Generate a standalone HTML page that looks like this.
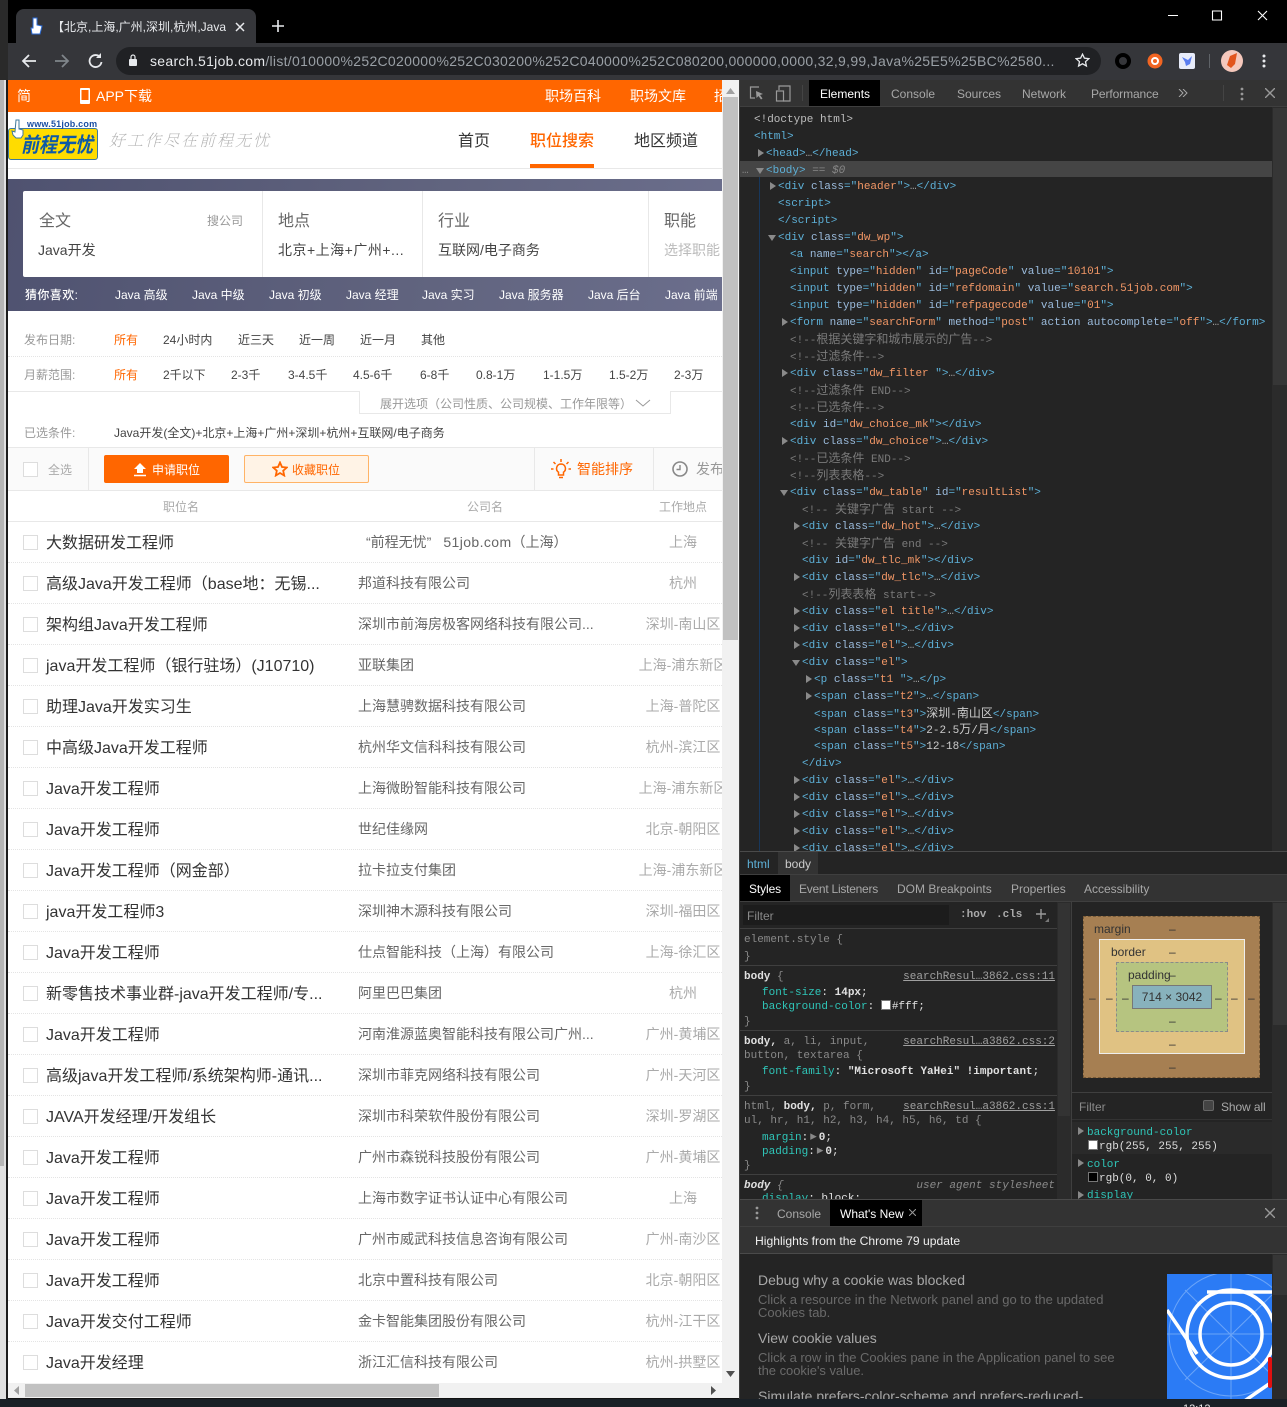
<!DOCTYPE html>
<html lang="zh"><head><meta charset="utf-8"><title>51job</title>
<style>
*{box-sizing:border-box}
html,body{margin:0;padding:0;width:1287px;height:1407px;overflow:hidden;background:#111;font-family:"Liberation Sans","Noto Sans CJK SC",sans-serif}
.a{position:absolute;white-space:nowrap}
.t{position:absolute;white-space:nowrap;line-height:20px;height:20px}
.f12{font-size:12px}.f14{font-size:14px}.f16{font-size:16px}
.g{color:#999}.d{color:#444}.o{color:#f60}
#clip{position:absolute;left:0;top:0;width:722px;height:1383px;overflow:hidden}
.row{position:absolute;left:8px;width:714px;height:41px;border-bottom:1px dotted #e4e4e4;background:#fff}
.row i{position:absolute;left:15px;top:13px;width:15px;height:15px;border:1px solid #ddd}
.row b{position:absolute;font-weight:400;white-space:nowrap;top:10px;line-height:20px}
.row .n{left:38px;top:12px;font-size:16px;color:#333}
.row .c{left:350px;font-size:14px;color:#666}
.row .l{left:575px;width:200px;text-align:center;font-size:14px;color:#aaa}
.code{position:absolute;left:740px;top:111.6px;width:532px;height:739.4px;overflow:hidden;font:11px/16.977px "Liberation Mono","Noto Sans CJK SC",monospace;color:#a8a8a8}
.code div{position:relative;height:16.977px;white-space:pre}
.k{font-size:12px}
.x{color:#5db0d7}.y{color:#9bbbdc}.z{color:#f29766}.m{color:#7a7a7a}
.r:before,.dn:before{content:"";position:absolute;top:3px}
.r:before{left:-8px;border-left:6px solid #8a8a8a;border-top:4px solid transparent;border-bottom:4px solid transparent}
.dn:before{left:-10px;top:5px;border-top:6px solid #8a8a8a;border-left:4px solid transparent;border-right:4px solid transparent}
.i0{padding-left:14px}.i1{padding-left:26px}.i2{padding-left:38px}.i3{padding-left:50px}.i4{padding-left:62px}.i5{padding-left:74px}
.i1.r:before{left:18px}.i2.r:before{left:30px}.i3.r:before{left:42px}.i4.r:before{left:54px}.i5.r:before{left:66px}
.i1.dn:before{left:16px}.i2.dn:before{left:28px}.i3.dn:before{left:40px}.i4.dn:before{left:52px}
.s{position:absolute;white-space:nowrap;font:11px/14px "Liberation Mono",monospace;color:#a0a0a0;margin-top:6px}
.v{color:#2fc5b8}.w{color:#e0e0e0}.li{color:#a0a0a0;text-decoration:underline}
.dt{position:absolute;font-size:12px;line-height:16px;white-space:nowrap;color:#a8a8a8}
.h{position:absolute;height:1px;background:#3f3f3f}
.sw{display:inline-block;width:10px;height:10px;border:1px solid #777;vertical-align:-1px;margin-right:1px}
</style></head><body>

<!-- window frame -->
<div class="a" style="left:0;top:0;width:1287px;height:43px;background:#000"></div>
<div class="a" style="left:0;top:0;width:8px;height:80px;background:#2a2a2a"></div>
<div class="a" style="left:0;top:80px;width:6px;height:1320px;background:#e0e0e0"></div>
<div class="a" style="left:0;top:80px;width:4px;height:1086px;background:#b5b5b5"></div>
<div class="a" style="left:6px;top:80px;width:2px;height:1320px;background:#1c1c1c"></div>
<div class="a" style="left:8px;top:43px;width:1279px;height:37px;background:#35363a"></div>
<div class="a" style="left:16px;top:9px;width:240px;height:35px;background:#35363a;border-radius:8px 8px 0 0"></div>
<svg class="a" style="left:28px;top:16px" width="16" height="20" viewBox="0 0 16 20"><path d="M5 2v10H3l1 6h8l2-8-5-1V2z" fill="#fff" stroke="#2b6bd6" stroke-width="1"/></svg>
<div class="t" style="left:52px;top:17px;width:174px;overflow:hidden;font-size:12px;color:#e8eaed">【北京,上海,广州,深圳,杭州,Java开发</div>
<svg class="a" style="left:235px;top:22px" width="10" height="10" viewBox="0 0 10 10"><path d="M1 1l8 8M9 1l-8 8" stroke="#e8eaed" stroke-width="1.500"/></svg>
<svg class="a" style="left:271px;top:19px" width="14" height="14" viewBox="0 0 14 14"><path d="M7 1v12M1 7h12" stroke="#e8eaed" stroke-width="1.600"/></svg>
<svg class="a" style="left:1168px;top:10px" width="110" height="12" viewBox="0 0 110 12"><path d="M0 5.500h10" stroke="#fff" stroke-width="1"/><path d="M44.500 1h9v9h-9z" fill="none" stroke="#fff" stroke-width="1.100"/><path d="M90 1l9 9M99 1l-9 9" stroke="#fff" stroke-width="1.100"/></svg>
<svg class="a" style="left:21px;top:52px" width="84" height="18" viewBox="0 0 84 18"><path d="M15 9H3M8 3L2 9l6 6" fill="none" stroke="#e8eaed" stroke-width="1.800"/><path d="M34 9h12M41 3l6 6-6 6" fill="none" stroke="#80868b" stroke-width="1.800"/><path d="M79 5a6 6 0 1 0 1.500 5" fill="none" stroke="#e8eaed" stroke-width="1.800"/><path d="M80 1v5h-5z" fill="#e8eaed"/></svg>
<div class="a" style="left:116px;top:47px;width:985px;height:28px;background:#202124;border-radius:14px"></div>
<svg class="a" style="left:128px;top:54px" width="10" height="13" viewBox="0 0 10 13"><rect x="1" y="5" width="8" height="7" rx="1" fill="#e8eaed"/><path d="M3 5V3a2 2 0 0 1 4 0v2" fill="none" stroke="#e8eaed" stroke-width="1.200"/></svg>
<div class="t" style="left:150px;top:51px;font-size:14px;width:905px;overflow:hidden;color:#9aa0a6;letter-spacing:.3px"><span style="color:#e8eaed">search.51job.com</span>/list/010000%252C020000%252C030200%252C040000%252C080200,000000,0000,32,9,99,Java%25E5%25BC%2580...</div>
<svg class="a" style="left:1075px;top:53px" width="15" height="15" viewBox="0 0 15 15"><path d="M7.500 1.200l1.900 4 4.400.5-3.300 3 .9 4.300-3.900-2.200L3.600 13l.9-4.300-3.300-3 4.400-.5z" fill="none" stroke="#e8eaed" stroke-width="1.300"/></svg>
<svg class="a" style="left:1113px;top:49px" width="160" height="24" viewBox="0 0 160 24"><circle cx="10" cy="12" r="6" fill="none" stroke="#000" stroke-width="4"/><circle cx="42" cy="12" r="7.500" fill="#f26522"/><circle cx="42" cy="12" r="3" fill="none" stroke="#fff" stroke-width="2"/><rect x="66" y="4" width="16" height="16" rx="2" fill="#e8ecfa"/><path d="M69 8l6 3 4-4-2 8-4 2-1-4z" fill="#5a7df0"/><path d="M96.500 5v14" stroke="#5f6368" stroke-width="1"/><circle cx="119" cy="12" r="11" fill="#f5c8bc"/><path d="M114 16l3-9 7-3-2 11-4 4z" fill="#e2541c"/></svg>
<svg class="a" style="left:1262px;top:54px" width="4" height="14" viewBox="0 0 4 14"><circle cx="2" cy="2" r="1.500" fill="#e8eaed"/><circle cx="2" cy="7" r="1.500" fill="#e8eaed"/><circle cx="2" cy="12" r="1.500" fill="#e8eaed"/></svg>

<!-- page -->
<div id="clip">
<div class="a" style="left:8px;top:80px;width:714px;height:1303px;background:#fff"></div>
<div class="a" style="left:8px;top:80px;width:714px;height:32px;background:#f60"></div>
<div class="t f14" style="left:17px;top:86px;color:#fff">简</div>
<svg class="a" style="left:80px;top:88px" width="10" height="16" viewBox="0 0 10 16"><rect x="0" y="0" width="10" height="16" rx="1" fill="#fff"/><rect x="1.500" y="2" width="7" height="10" fill="#f60"/></svg>
<div class="t f14" style="left:96px;top:86px;color:#fff">APP下载</div>
<div class="t f14" style="left:545px;top:86px;color:#fff">职场百科</div>
<div class="t f14" style="left:630px;top:86px;color:#fff">职场文库</div>
<div class="t f14" style="left:714px;top:86px;color:#fff">招聘</div>

<!-- logo -->
<div class="a" style="left:8px;top:128px;width:90px;height:32px;background:#ffdc00;border:1px solid #3f7a9c;border-radius:3px"></div>
<div class="t" style="left:27px;top:114px;font-size:9px;font-weight:700;color:#1b4fa3;letter-spacing:.2px">www.51job.com</div>
<div class="t" style="left:21px;top:135px;font-size:18px;font-weight:700;font-style:italic;color:#0d59a8;transform:scaleY(1.150)">前程无忧</div>
<svg class="a" style="left:11px;top:119px" width="14" height="20" viewBox="0 0 14 20"><path d="M5 1h3v9l4 1v5l-2 3H5l-3-3-1-4 3 1z" fill="#fff" stroke="#3f7a9c" stroke-width="1"/></svg>
<div class="t" style="left:109px;top:130px;font-size:16px;letter-spacing:2px;color:#b0b0b0;font-family:'Noto Serif CJK SC',serif;font-style:italic;font-weight:200">好工作尽在前程无忧</div>
<div class="t f16" style="left:458px;top:132px;color:#333">首页</div>
<div class="t f16" style="left:530px;top:132px;color:#f60;font-weight:500">职位搜索</div>
<div class="a" style="left:530px;top:164px;width:64px;height:4px;background:#f60"></div>
<div class="t f16" style="left:634px;top:132px;color:#333">地区频道</div>
<div class="a" style="left:8px;top:168px;width:714px;height:1px;background:#e8e8e8"></div>

<!-- search -->
<div class="a" style="left:8px;top:179px;width:714px;height:132px;background:linear-gradient(100deg,#4f5270,#61647f 60%,#6b6e8c)"></div>
<div class="a" style="left:23px;top:191px;width:699px;height:86px;background:#fff;border-radius:2px 0 0 2px"></div>
<div class="a" style="left:262px;top:191px;width:1px;height:86px;background:#e8e8e8"></div>
<div class="a" style="left:422px;top:191px;width:1px;height:86px;background:#e8e8e8"></div>
<div class="a" style="left:648px;top:191px;width:1px;height:86px;background:#e8e8e8"></div>
<div class="t f16" style="left:39px;top:212px;color:#666">全文</div>
<div class="t f12" style="left:207px;top:211px;color:#999">搜公司</div>
<div class="t f14" style="left:38px;top:240px;color:#444">Java开发</div>
<div class="t f16" style="left:278px;top:212px;color:#666">地点</div>
<div class="t f14" style="left:278px;top:240px;color:#444;letter-spacing:.5px">北京+上海+广州+...</div>
<div class="t f16" style="left:438px;top:212px;color:#666">行业</div>
<div class="t f14" style="left:438px;top:240px;color:#444">互联网/电子商务</div>
<div class="t f16" style="left:664px;top:212px;color:#666">职能</div>
<div class="t f14" style="left:664px;top:240px;color:#bbb">选择职能</div>
<div class="t f12" style="left:25px;top:285px;color:#fff;font-weight:500;letter-spacing:.4px">猜你喜欢:</div>
<div class="t f12" style="left:115px;top:285px;color:#fff">Java 高级</div>
<div class="t f12" style="left:192px;top:285px;color:#fff">Java 中级</div>
<div class="t f12" style="left:269px;top:285px;color:#fff">Java 初级</div>
<div class="t f12" style="left:346px;top:285px;color:#fff">Java 经理</div>
<div class="t f12" style="left:422px;top:285px;color:#fff">Java 实习</div>
<div class="t f12" style="left:499px;top:285px;color:#fff">Java 服务器</div>
<div class="t f12" style="left:588px;top:285px;color:#fff">Java 后台</div>
<div class="t f12" style="left:665px;top:285px;color:#fff">Java 前端</div>

<!-- filters -->
<div class="t f12 g" style="left:24px;top:330px">发布日期:</div>
<div class="t f12 o" style="left:114px;top:330px">所有</div>
<div class="t f12 d" style="left:163px;top:330px">24小时内</div>
<div class="t f12 d" style="left:238px;top:330px">近三天</div>
<div class="t f12 d" style="left:299px;top:330px">近一周</div>
<div class="t f12 d" style="left:360px;top:330px">近一月</div>
<div class="t f12 d" style="left:421px;top:330px">其他</div>
<div class="a" style="left:8px;top:356px;width:714px;border-top:1px dotted #e4e4e4"></div>
<div class="t f12 g" style="left:24px;top:365px">月薪范围:</div>
<div class="t f12 o" style="left:114px;top:365px">所有</div>
<div class="t f12 d" style="left:163px;top:365px">2千以下</div>
<div class="t f12 d" style="left:231px;top:365px">2-3千</div>
<div class="t f12 d" style="left:288px;top:365px">3-4.5千</div>
<div class="t f12 d" style="left:353px;top:365px">4.5-6千</div>
<div class="t f12 d" style="left:420px;top:365px">6-8千</div>
<div class="t f12 d" style="left:476px;top:365px">0.8-1万</div>
<div class="t f12 d" style="left:543px;top:365px">1-1.5万</div>
<div class="t f12 d" style="left:609px;top:365px">1.5-2万</div>
<div class="t f12 d" style="left:674px;top:365px">2-3万</div>
<div class="a" style="left:8px;top:391px;width:352px;height:1px;background:#e8e8e8"></div>
<div class="a" style="left:670px;top:391px;width:52px;height:1px;background:#e8e8e8"></div>
<div class="a" style="left:359px;top:391px;width:312px;height:23px;border:1px solid #e8e8e8;border-top:0;background:#fff"></div>
<div class="t f12 g" style="left:380px;top:394px">展开选项（公司性质、公司规模、工作年限等）</div>
<svg class="a" style="left:635px;top:399px" width="16" height="9" viewBox="0 0 16 9"><path d="M1 1l7 6 7-6" fill="none" stroke="#999" stroke-width="1"/></svg>
<div class="t f12 g" style="left:24px;top:423px">已选条件:</div>
<div class="t f12 d" style="left:114px;top:423px">Java开发(全文)+北京+上海+广州+深圳+杭州+互联网/电子商务</div>

<!-- toolbar -->
<div class="a" style="left:8px;top:447px;width:714px;height:44px;background:#fafafa;border-top:1px solid #e8e8e8;border-bottom:1px solid #e8e8e8"></div>
<div class="a" style="left:88px;top:448px;width:1px;height:42px;background:#e8e8e8"></div>
<div class="a" style="left:534px;top:448px;width:1px;height:42px;background:#e8e8e8"></div>
<div class="a" style="left:653px;top:448px;width:1px;height:42px;background:#e8e8e8"></div>
<div class="a" style="left:23px;top:462px;width:15px;height:15px;border:1px solid #ddd;background:#fff"></div>
<div class="t f12" style="left:48px;top:460px;color:#aaa">全选</div>
<div class="a" style="left:104px;top:455px;width:125px;height:28px;background:#f60;border-radius:2px"></div>
<svg class="a" style="left:133px;top:462px" width="14" height="15" viewBox="0 0 14 15"><path d="M7 1L1 7h3v4h6V7h3z" fill="#fff"/><path d="M1 13.500h12" stroke="#fff" stroke-width="1.500"/></svg>
<div class="t f12" style="left:152px;top:460px;color:#fff">申请职位</div>
<div class="a" style="left:244px;top:455px;width:125px;height:28px;background:#fff3e6;border:1px solid #ffb366;border-radius:2px"></div>
<svg class="a" style="left:272px;top:461px" width="16" height="16" viewBox="0 0 16 16"><path d="M8 1.500l2 4.500 4.800.5-3.600 3.200 1 4.800L8 12l-4.200 2.500 1-4.800L1.200 6.500 6 6z" fill="none" stroke="#f60" stroke-width="1.800"/></svg>
<div class="t f12 o" style="left:292px;top:460px">收藏职位</div>
<svg class="a" style="left:551px;top:459px" width="20" height="20" viewBox="0 0 20 20"><path d="M10 5a4.500 4.500 0 0 0-2.500 8.200V16h5v-2.800A4.500 4.500 0 0 0 10 5zM8 18.500h4" fill="none" stroke="#f60" stroke-width="1.500"/><path d="M10 0v3M2.500 3l2 2M17.500 3l-2 2M0 10h2.500M20 10h-2.500" stroke="#f60" stroke-width="1.500"/></svg>
<div class="t f14 o" style="left:577px;top:459px">智能排序</div>
<svg class="a" style="left:672px;top:461px" width="16" height="16" viewBox="0 0 16 16"><circle cx="8" cy="8" r="7" fill="none" stroke="#888" stroke-width="1.600"/><path d="M8 4v4.500H4.500" fill="none" stroke="#888" stroke-width="1.400"/></svg>
<div class="t f14" style="left:696px;top:459px;color:#999">发布时间</div>

<!-- table head -->
<div class="t f12" style="left:163px;top:497px;color:#aaa">职位名</div>
<div class="t f12" style="left:467px;top:497px;color:#aaa">公司名</div>
<div class="t f12" style="left:659px;top:497px;color:#aaa">工作地点</div>
<div class="a" style="left:8px;top:521px;width:714px;height:1px;background:#e8e8e8"></div>

<div class="row" style="top:522px"><i></i><b class="n">大数据研发工程师</b><b class="c" style="left:358px">“前程无忧”<span style="margin-left:12px;letter-spacing:.4px">51job.com</span>（上海）</b><b class="l">上海</b></div>
<div class="row" style="top:563px"><i></i><b class="n">高级Java开发工程师（base地：无锡...</b><b class="c">邦道科技有限公司</b><b class="l">杭州</b></div>
<div class="row" style="top:604px"><i></i><b class="n">架构组Java开发工程师</b><b class="c">深圳市前海房极客网络科技有限公司...</b><b class="l">深圳-南山区</b></div>
<div class="row" style="top:645px"><i></i><b class="n">java开发工程师（银行驻场）(J10710)</b><b class="c">亚联集团</b><b class="l">上海-浦东新区</b></div>
<div class="row" style="top:686px"><i></i><b class="n">助理Java开发实习生</b><b class="c">上海慧骋数据科技有限公司</b><b class="l">上海-普陀区</b></div>
<div class="row" style="top:727px"><i></i><b class="n">中高级Java开发工程师</b><b class="c">杭州华文信科科技有限公司</b><b class="l">杭州-滨江区</b></div>
<div class="row" style="top:768px"><i></i><b class="n">Java开发工程师</b><b class="c">上海微盼智能科技有限公司</b><b class="l">上海-浦东新区</b></div>
<div class="row" style="top:809px"><i></i><b class="n">Java开发工程师</b><b class="c">世纪佳缘网</b><b class="l">北京-朝阳区</b></div>
<div class="row" style="top:850px"><i></i><b class="n">Java开发工程师（网金部）</b><b class="c">拉卡拉支付集团</b><b class="l">上海-浦东新区</b></div>
<div class="row" style="top:891px"><i></i><b class="n">java开发工程师3</b><b class="c">深圳神木源科技有限公司</b><b class="l">深圳-福田区</b></div>
<div class="row" style="top:932px"><i></i><b class="n">Java开发工程师</b><b class="c">仕点智能科技（上海）有限公司</b><b class="l">上海-徐汇区</b></div>
<div class="row" style="top:973px"><i></i><b class="n">新零售技术事业群-java开发工程师/专...</b><b class="c">阿里巴巴集团</b><b class="l">杭州</b></div>
<div class="row" style="top:1014px"><i></i><b class="n">Java开发工程师</b><b class="c">河南淮源蓝奥智能科技有限公司广州...</b><b class="l">广州-黄埔区</b></div>
<div class="row" style="top:1055px"><i></i><b class="n">高级java开发工程师/系统架构师-通讯...</b><b class="c">深圳市菲克网络科技有限公司</b><b class="l">广州-天河区</b></div>
<div class="row" style="top:1096px"><i></i><b class="n">JAVA开发经理/开发组长</b><b class="c">深圳市科荣软件股份有限公司</b><b class="l">深圳-罗湖区</b></div>
<div class="row" style="top:1137px"><i></i><b class="n">Java开发工程师</b><b class="c">广州市森锐科技股份有限公司</b><b class="l">广州-黄埔区</b></div>
<div class="row" style="top:1178px"><i></i><b class="n">Java开发工程师</b><b class="c">上海市数字证书认证中心有限公司</b><b class="l">上海</b></div>
<div class="row" style="top:1219px"><i></i><b class="n">Java开发工程师</b><b class="c">广州市威武科技信息咨询有限公司</b><b class="l">广州-南沙区</b></div>
<div class="row" style="top:1260px"><i></i><b class="n">Java开发工程师</b><b class="c">北京中置科技有限公司</b><b class="l">北京-朝阳区</b></div>
<div class="row" style="top:1301px"><i></i><b class="n">Java开发交付工程师</b><b class="c">金卡智能集团股份有限公司</b><b class="l">杭州-江干区</b></div>
<div class="row" style="top:1342px;border:0"><i></i><b class="n">Java开发经理</b><b class="c">浙江汇信科技有限公司</b><b class="l">杭州-拱墅区</b></div>
</div>

<!-- page scrollbars -->
<div class="a" style="left:722px;top:80px;width:17px;height:1303px;background:#f1f1f1"></div>
<div class="a" style="left:723px;top:97px;width:15px;height:543px;background:#c1c1c1"></div>
<svg class="a" style="left:726px;top:88px" width="9" height="6" viewBox="0 0 9 6"><path d="M4.500 0L9 6H0z" fill="#a0a0a0"/></svg>
<svg class="a" style="left:726px;top:1371px" width="9" height="6" viewBox="0 0 9 6"><path d="M4.500 6L9 0H0z" fill="#505050"/></svg>
<div class="a" style="left:8px;top:1383px;width:731px;height:15px;background:#f1f1f1"></div>
<div class="a" style="left:25px;top:1384px;width:414px;height:13px;background:#c1c1c1"></div>
<svg class="a" style="left:14px;top:1386px" width="5" height="9" viewBox="0 0 5 9"><path d="M0 4.500L5 0v9z" fill="#a0a0a0"/></svg>
<svg class="a" style="left:711px;top:1386px" width="5" height="9" viewBox="0 0 5 9"><path d="M5 4.500L0 0v9z" fill="#505050"/></svg>

<!-- devtools -->
<div class="a" style="left:739px;top:80px;width:548px;height:1319px;background:#242424"></div>
<div class="a" style="left:739px;top:80px;width:1px;height:1319px;background:#3d3d3d"></div>
<div class="a" style="left:740px;top:80px;width:547px;height:26px;background:#333"></div>
<div class="h" style="left:740px;top:106px;width:547px"></div>
<svg class="a" style="left:749px;top:85px" width="44" height="17" viewBox="0 0 44 17"><path d="M10 2H1.500v11H6" fill="none" stroke="#9a9a9a" stroke-width="1.200"/><path d="M7 6l7 3-3 1 2.500 3.500-1.500 1L9.500 11 7.500 13z" fill="#9a9a9a"/><path d="M30 5V1h11v15h-7" fill="none" stroke="#9a9a9a" stroke-width="1.200"/><rect x="27.500" y="6" width="7" height="10" fill="none" stroke="#9a9a9a" stroke-width="1.200"/></svg>
<div class="a" style="left:802px;top:85px;width:1px;height:16px;background:#444"></div>
<div class="a" style="left:809px;top:80px;width:71px;height:26px;background:#000"></div>
<div class="t f12" style="left:820px;top:84px;color:#fff">Elements</div>
<div class="t f12" style="left:891px;top:84px;color:#a8a8a8">Console</div>
<div class="t f12" style="left:957px;top:84px;color:#a8a8a8">Sources</div>
<div class="t f12" style="left:1022px;top:84px;color:#a8a8a8">Network</div>
<div class="t f12" style="left:1091px;top:84px;color:#a8a8a8;letter-spacing:-.1px">Performance</div>
<svg class="a" style="left:1178px;top:89px" width="10" height="8" viewBox="0 0 10 8"><path d="M1 0l4 4-4 4M5 0l4 4-4 4" fill="none" stroke="#a8a8a8"/></svg>
<div class="a" style="left:1223px;top:85px;width:1px;height:16px;background:#444"></div>
<svg class="a" style="left:1240px;top:87px" width="4" height="14" viewBox="0 0 4 14"><circle cx="2" cy="2" r="1.400" fill="#999"/><circle cx="2" cy="7" r="1.400" fill="#999"/><circle cx="2" cy="12" r="1.400" fill="#999"/></svg>
<svg class="a" style="left:1265px;top:88px" width="10" height="10" viewBox="0 0 10 10"><path d="M0 0l10 10M10 0L0 10" stroke="#999" stroke-width="1.400"/></svg>

<div class="a" style="left:740px;top:161px;width:532px;height:16px;background:#454545"></div>
<div class="a" style="left:759px;top:177px;width:1px;height:674px;background:#17375c"></div>
<div class="code">
<div class="i0" style="color:#bdbdbd">&lt;!doctype html&gt;</div>
<div class="i0"><span class="x">&lt;html&gt;</span></div>
<div class="i1 r"><span class="x">&lt;head&gt;</span>…<span class="x">&lt;/head&gt;</span></div>
<div class="i1 dn"><span class="x">&lt;body&gt;</span><span style="color:#888"> == <em>$0</em></span><span style="position:absolute;left:2px;top:0;color:#888">…</span></div>
<div class="i2 r"><span class="x">&lt;div</span> <span class="y">class</span><span class="x">="</span><span class="z">header</span><span class="x">"&gt;</span>…<span class="x">&lt;/div&gt;</span></div>
<div class="i2"><span class="x">&lt;script&gt;</span></div>
<div class="i2"><span class="x">&lt;/script&gt;</span></div>
<div class="i2 dn"><span class="x">&lt;div</span> <span class="y">class</span><span class="x">="</span><span class="z">dw_wp</span><span class="x">"&gt;</span></div>
<div class="i3"><span class="x">&lt;a</span> <span class="y">name</span><span class="x">="</span><span class="z">search</span><span class="x">"&gt;&lt;/a&gt;</span></div>
<div class="i3"><span class="x">&lt;input</span> <span class="y">type</span><span class="x">="</span><span class="z">hidden</span><span class="x">"</span> <span class="y">id</span><span class="x">="</span><span class="z">pageCode</span><span class="x">"</span> <span class="y">value</span><span class="x">="</span><span class="z">10101</span><span class="x">"&gt;</span></div>
<div class="i3"><span class="x">&lt;input</span> <span class="y">type</span><span class="x">="</span><span class="z">hidden</span><span class="x">"</span> <span class="y">id</span><span class="x">="</span><span class="z">refdomain</span><span class="x">"</span> <span class="y">value</span><span class="x">="</span><span class="z">search.51job.com</span><span class="x">"&gt;</span></div>
<div class="i3"><span class="x">&lt;input</span> <span class="y">type</span><span class="x">="</span><span class="z">hidden</span><span class="x">"</span> <span class="y">id</span><span class="x">="</span><span class="z">refpagecode</span><span class="x">"</span> <span class="y">value</span><span class="x">="</span><span class="z">01</span><span class="x">"&gt;</span></div>
<div class="i3 r"><span class="x">&lt;form</span> <span class="y">name</span><span class="x">="</span><span class="z">searchForm</span><span class="x">"</span> <span class="y">method</span><span class="x">="</span><span class="z">post</span><span class="x">"</span> <span class="y">action autocomplete</span><span class="x">="</span><span class="z">off</span><span class="x">"&gt;</span>…<span class="x">&lt;/form&gt;</span></div>
<div class="i3 m">&lt;!--<span class="k">根据关键字和城市展示的广告</span>--&gt;</div>
<div class="i3 m">&lt;!--<span class="k">过滤条件</span>--&gt;</div>
<div class="i3 r"><span class="x">&lt;div</span> <span class="y">class</span><span class="x">="</span><span class="z">dw_filter </span><span class="x">"&gt;</span>…<span class="x">&lt;/div&gt;</span></div>
<div class="i3 m">&lt;!--<span class="k">过滤条件</span> END--&gt;</div>
<div class="i3 m">&lt;!--<span class="k">已选条件</span>--&gt;</div>
<div class="i3"><span class="x">&lt;div</span> <span class="y">id</span><span class="x">="</span><span class="z">dw_choice_mk</span><span class="x">"&gt;&lt;/div&gt;</span></div>
<div class="i3 r"><span class="x">&lt;div</span> <span class="y">class</span><span class="x">="</span><span class="z">dw_choice</span><span class="x">"&gt;</span>…<span class="x">&lt;/div&gt;</span></div>
<div class="i3 m">&lt;!--<span class="k">已选条件</span> END--&gt;</div>
<div class="i3 m">&lt;!--<span class="k">列表表格</span>--&gt;</div>
<div class="i3 dn"><span class="x">&lt;div</span> <span class="y">class</span><span class="x">="</span><span class="z">dw_table</span><span class="x">"</span> <span class="y">id</span><span class="x">="</span><span class="z">resultList</span><span class="x">"&gt;</span></div>
<div class="i4 m">&lt;!-- <span class="k">关键字广告</span> start --&gt;</div>
<div class="i4 r"><span class="x">&lt;div</span> <span class="y">class</span><span class="x">="</span><span class="z">dw_hot</span><span class="x">"&gt;</span>…<span class="x">&lt;/div&gt;</span></div>
<div class="i4 m">&lt;!-- <span class="k">关键字广告</span> end --&gt;</div>
<div class="i4"><span class="x">&lt;div</span> <span class="y">id</span><span class="x">="</span><span class="z">dw_tlc_mk</span><span class="x">"&gt;&lt;/div&gt;</span></div>
<div class="i4 r"><span class="x">&lt;div</span> <span class="y">class</span><span class="x">="</span><span class="z">dw_tlc</span><span class="x">"&gt;</span>…<span class="x">&lt;/div&gt;</span></div>
<div class="i4 m">&lt;!--<span class="k">列表表格</span> start--&gt;</div>
<div class="i4 r"><span class="x">&lt;div</span> <span class="y">class</span><span class="x">="</span><span class="z">el title</span><span class="x">"&gt;</span>…<span class="x">&lt;/div&gt;</span></div>
<div class="i4 r"><span class="x">&lt;div</span> <span class="y">class</span><span class="x">="</span><span class="z">el</span><span class="x">"&gt;</span>…<span class="x">&lt;/div&gt;</span></div>
<div class="i4 r"><span class="x">&lt;div</span> <span class="y">class</span><span class="x">="</span><span class="z">el</span><span class="x">"&gt;</span>…<span class="x">&lt;/div&gt;</span></div>
<div class="i4 dn"><span class="x">&lt;div</span> <span class="y">class</span><span class="x">="</span><span class="z">el</span><span class="x">"&gt;</span></div>
<div class="i5 r"><span class="x">&lt;p</span> <span class="y">class</span><span class="x">="</span><span class="z">t1 </span><span class="x">"&gt;</span>…<span class="x">&lt;/p&gt;</span></div>
<div class="i5 r"><span class="x">&lt;span</span> <span class="y">class</span><span class="x">="</span><span class="z">t2</span><span class="x">"&gt;</span>…<span class="x">&lt;/span&gt;</span></div>
<div class="i5"><span class="x">&lt;span</span> <span class="y">class</span><span class="x">="</span><span class="z">t3</span><span class="x">"&gt;</span><span style="color:#ccc"><span class="k">深圳</span>-<span class="k">南山区</span></span><span class="x">&lt;/span&gt;</span></div>
<div class="i5"><span class="x">&lt;span</span> <span class="y">class</span><span class="x">="</span><span class="z">t4</span><span class="x">"&gt;</span><span style="color:#ccc">2-2.5<span class="k">万</span>/<span class="k">月</span></span><span class="x">&lt;/span&gt;</span></div>
<div class="i5"><span class="x">&lt;span</span> <span class="y">class</span><span class="x">="</span><span class="z">t5</span><span class="x">"&gt;</span><span style="color:#ccc">12-18</span><span class="x">&lt;/span&gt;</span></div>
<div class="i4"><span class="x">&lt;/div&gt;</span></div>
<div class="i4 r"><span class="x">&lt;div</span> <span class="y">class</span><span class="x">="</span><span class="z">el</span><span class="x">"&gt;</span>…<span class="x">&lt;/div&gt;</span></div>
<div class="i4 r"><span class="x">&lt;div</span> <span class="y">class</span><span class="x">="</span><span class="z">el</span><span class="x">"&gt;</span>…<span class="x">&lt;/div&gt;</span></div>
<div class="i4 r"><span class="x">&lt;div</span> <span class="y">class</span><span class="x">="</span><span class="z">el</span><span class="x">"&gt;</span>…<span class="x">&lt;/div&gt;</span></div>
<div class="i4 r"><span class="x">&lt;div</span> <span class="y">class</span><span class="x">="</span><span class="z">el</span><span class="x">"&gt;</span>…<span class="x">&lt;/div&gt;</span></div>
<div class="i4 r"><span class="x">&lt;div</span> <span class="y">class</span><span class="x">="</span><span class="z">el</span><span class="x">"&gt;</span>…<span class="x">&lt;/div&gt;</span></div>
</div>
<div class="a" style="left:1272px;top:107px;width:15px;height:744px;background:#2b2b2b"></div>
<div class="a" style="left:1273px;top:108px;width:14px;height:277px;background:#363636"></div>

<!-- breadcrumbs + tabs -->
<div class="a" style="left:740px;top:851px;width:547px;height:1px;background:#4a4a4a"></div>
<div class="a" style="left:778px;top:852px;width:40px;height:22px;background:#333"></div>
<div class="t f12" style="left:747px;top:854px;color:#5db0d7">html</div>
<div class="t f12" style="left:785px;top:854px;color:#ccc">body</div>
<div class="h" style="left:740px;top:874px;width:547px"></div>
<div class="a" style="left:740px;top:875px;width:547px;height:26px;background:#333"></div>
<div class="a" style="left:740px;top:875px;width:50px;height:26px;background:#000"></div>
<div class="t f12" style="left:749px;top:879px;color:#fff;letter-spacing:-.1px">Styles</div>
<div class="t f12" style="left:799px;top:879px;color:#a8a8a8;letter-spacing:-.25px">Event Listeners</div>
<div class="t f12" style="left:897px;top:879px;color:#a8a8a8">DOM Breakpoints</div>
<div class="t f12" style="left:1011px;top:879px;color:#a8a8a8">Properties</div>
<div class="t f12" style="left:1084px;top:879px;color:#a8a8a8">Accessibility</div>
<div class="h" style="left:740px;top:901px;width:547px"></div>

<!-- styles pane -->
<div class="a" style="left:743px;top:905px;width:206px;height:20px;background:#1c1c1c"></div>
<div class="t f12" style="left:747px;top:906px;color:#8a8a8a">Filter</div>
<div class="s" style="left:960px;top:902px;font-weight:700;color:#aaa">:hov</div>
<div class="s" style="left:996px;top:902px;font-weight:700;color:#aaa">.cls</div>
<svg class="a" style="left:1035px;top:908px" width="14" height="14" viewBox="0 0 14 14"><path d="M6 1v10M1 6h10" stroke="#999" stroke-width="1.400"/><path d="M14 10v4h-4z" fill="#777"/></svg>
<div class="h" style="left:740px;top:928px;width:317px"></div>
<div class="s" style="left:744px;top:927px;color:#8a8a8a">element.style {</div>
<div class="s" style="left:744px;top:944px;color:#8a8a8a">}</div>
<div class="h" style="left:740px;top:965px;width:317px"></div>
<div class="s" style="left:744px;top:964px"><span class="w"><b>body</b></span> <span style="color:#8a8a8a">{</span></div>
<div class="s li" style="right:232px;top:964px">searchResul…3862.css:11</div>
<div class="s" style="left:762px;top:980px"><span class="v">font-size</span><span class="w">: <b>14px</b>;</span></div>
<div class="s" style="left:762px;top:994px"><span class="v">background-color</span><span class="w">: <span class="sw" style="background:#fff"></span>#fff;</span></div>
<div class="s" style="left:744px;top:1009px;color:#8a8a8a">}</div>
<div class="h" style="left:740px;top:1030px;width:317px"></div>
<div class="s" style="left:744px;top:1029px;color:#8a8a8a"><span class="w"><b>body,</b></span> a, li, input,</div>
<div class="s li" style="right:232px;top:1029px">searchResul…a3862.css:2</div>
<div class="s" style="left:744px;top:1043px;color:#8a8a8a">button, textarea {</div>
<div class="s" style="left:762px;top:1059px"><span class="v">font-family</span><span class="w">: <b>"Microsoft YaHei" !important</b>;</span></div>
<div class="s" style="left:744px;top:1074px;color:#8a8a8a">}</div>
<div class="h" style="left:740px;top:1095px;width:317px"></div>
<div class="s" style="left:744px;top:1094px;color:#8a8a8a">html, <span class="w"><b>body,</b></span> p, form,</div>
<div class="s li" style="right:232px;top:1094px">searchResul…a3862.css:1</div>
<div class="s" style="left:744px;top:1108px;color:#8a8a8a">ul, hr, h1, h2, h3, h4, h5, h6, td {</div>
<div class="s" style="left:762px;top:1124px"><span class="v">margin</span><span class="w">:<span style="color:#888;font-size:13px;font-family:'DejaVu Sans';margin:0 2px">▸</span><b>0</b>;</span></div>
<div class="s" style="left:762px;top:1138px"><span class="v">padding</span><span class="w">:<span style="color:#888;font-size:13px;font-family:'DejaVu Sans';margin:0 2px">▸</span><b>0</b>;</span></div>
<div class="s" style="left:744px;top:1153px;color:#8a8a8a">}</div>
<div class="h" style="left:740px;top:1174px;width:317px"></div>
<div class="s" style="left:744px;top:1173px;font-style:italic;color:#8a8a8a"><span class="w"><b>body</b></span> {</div>
<div class="s" style="right:232px;top:1173px;font-style:italic;color:#8a8a8a">user agent stylesheet</div>
<div class="s" style="left:762px;top:1186px"><span class="v">display</span><span class="w">: block;</span></div>
<div class="a" style="left:1057px;top:902px;width:14px;height:297px;background:#2b2b2b"></div>
<div class="a" style="left:1058px;top:903px;width:12px;height:213px;background:#333"></div>
<div class="a" style="left:1071px;top:902px;width:1px;height:297px;background:#3f3f3f"></div>

<!-- box model -->
<div class="a" style="left:1083px;top:916px;width:177px;height:162px;background:#a67f52;border:1px dashed #7a5c38"></div>
<div class="a" style="left:1099px;top:939px;width:146px;height:115px;background:#e0c283;border:1px solid #eee"></div>
<div class="a" style="left:1116px;top:962px;width:112px;height:70px;background:#b6c480;border:1px dashed #8a8a8a"></div>
<div class="a" style="left:1132px;top:985px;width:80px;height:24px;background:#88b2bd;border:1px solid #777;text-align:center;font-size:12px;line-height:22px;color:#333">714 × 3042</div>
<div class="t f12" style="left:1094px;top:919px;color:#333">margin</div>
<div class="t f12" style="left:1111px;top:942px;color:#333">border</div>
<div class="t f12" style="left:1128px;top:965px;color:#333">padding</div>
<div class="t f12" style="left:1169px;top:919px;color:#333">–</div>
<div class="t f12" style="left:1169px;top:942px;color:#333">–</div>
<div class="t f12" style="left:1169px;top:965px;color:#333">–</div>
<div class="t f12" style="left:1169px;top:1011px;color:#333">–</div>
<div class="t f12" style="left:1169px;top:1034px;color:#333">–</div>
<div class="t f12" style="left:1169px;top:1057px;color:#333">–</div>
<div class="t f12" style="left:1089px;top:988px;color:#333">–</div>
<div class="t f12" style="left:1106px;top:988px;color:#333">–</div>
<div class="t f12" style="left:1122px;top:988px;color:#333">–</div>
<div class="t f12" style="left:1215px;top:988px;color:#333">–</div>
<div class="t f12" style="left:1231px;top:988px;color:#333">–</div>
<div class="t f12" style="left:1248px;top:988px;color:#333">–</div>
<div class="h" style="left:1072px;top:1092px;width:200px"></div>
<div class="t f12" style="left:1079px;top:1097px;color:#8a8a8a">Filter</div>
<div class="a" style="left:1203px;top:1100px;width:11px;height:11px;background:#444;border:1px solid #666;border-radius:2px"></div>
<div class="t f12" style="left:1221px;top:1097px;color:#a8a8a8;letter-spacing:-.1px">Show all</div>
<div class="a" style="left:1072px;top:1119px;width:200px;height:1px;background:#333"></div>
<div class="a" style="left:1072px;top:1122px;width:200px;height:32px;background:#2a2a2a"></div>
<div class="s" style="left:1087px;top:1120px;color:#2fc5b8">background-color</div>
<div class="s" style="left:1088px;top:1134px;color:#ddd"><span class="sw" style="background:#fff"></span>rgb(255, 255, 255)</div>
<div class="s" style="left:1087px;top:1152px;color:#2fc5b8">color</div>
<div class="s" style="left:1088px;top:1166px;color:#ddd"><span class="sw" style="background:#000"></span>rgb(0, 0, 0)</div>
<div class="s" style="left:1087px;top:1183px;color:#2fc5b8">display</div>
<svg class="a" style="left:1078px;top:1127px" width="6" height="72" viewBox="0 0 6 72"><path d="M0 0l6 4-6 4zM0 32l6 4-6 4zM0 64l6 4-6 4z" fill="#888"/></svg>
<div class="a" style="left:1272px;top:902px;width:15px;height:297px;background:#2b2b2b"></div>
<div class="a" style="left:1273px;top:903px;width:14px;height:122px;background:#363636"></div>

<!-- drawer -->
<div class="a" style="left:740px;top:1199px;width:547px;height:1px;background:#4a4a4a"></div>
<div class="a" style="left:740px;top:1200px;width:547px;height:26px;background:#333"></div>
<svg class="a" style="left:755px;top:1206px" width="4" height="14" viewBox="0 0 4 14"><circle cx="2" cy="2" r="1.400" fill="#999"/><circle cx="2" cy="7" r="1.400" fill="#999"/><circle cx="2" cy="12" r="1.400" fill="#999"/></svg>
<div class="t f12" style="left:777px;top:1204px;color:#a8a8a8">Console</div>
<div class="a" style="left:830px;top:1200px;width:92px;height:26px;background:#000"></div>
<div class="t f12" style="left:840px;top:1204px;color:#fff">What's New</div>
<svg class="a" style="left:909px;top:1209px" width="7" height="7" viewBox="0 0 7 7"><path d="M0 0l7 7M7 0L0 7" stroke="#999"/></svg>
<svg class="a" style="left:1265px;top:1208px" width="10" height="10" viewBox="0 0 10 10"><path d="M0 0l10 10M10 0L0 10" stroke="#999" stroke-width="1.400"/></svg>
<div class="h" style="left:740px;top:1226px;width:547px"></div>
<div class="a" style="left:740px;top:1227px;width:547px;height:26px;background:#333"></div>
<div class="t f12" style="left:755px;top:1231px;color:#eee;font-size:12.150px">Highlights from the Chrome 79 update</div>
<div class="h" style="left:740px;top:1253px;width:547px;background:#4a4a4a"></div>
<div class="t" style="left:758px;top:1270px;font-size:14px;color:#a8a8a8">Debug why a cookie was blocked</div>
<div class="dt" style="left:758px;top:1293px;color:#6a6a6a;font-size:13px;line-height:13px">Click a resource in the Network panel and go to the updated<br>Cookies tab.</div>
<div class="t" style="left:758px;top:1328px;font-size:14px;color:#a8a8a8">View cookie values</div>
<div class="dt" style="left:758px;top:1351px;color:#6a6a6a;font-size:13px;line-height:13px;letter-spacing:-.03px">Click a row in the Cookies pane in the Application panel to see<br>the cookie's value.</div>
<div class="a" style="left:758px;top:1386px;height:13px;overflow:hidden;font-size:14px;line-height:20px;color:#a8a8a8">Simulate prefers-color-scheme and prefers-reduced-</div>
<svg class="a" style="left:1167px;top:1274px" width="105" height="125" viewBox="0 0 105 125"><rect width="105" height="125" fill="#2b7bf5"/><g stroke="#6aa4f8" stroke-width="1" fill="none"><path d="M64 0v125M0 60h105M18 16l92 90M110 16L18 106"/><circle cx="64" cy="60" r="62"/></g><g fill="none" stroke="#fff" stroke-width="3.500"><circle cx="64" cy="60" r="31"/><circle cx="64" cy="60" r="44"/><path d="M0 36l30 44M40 18h65M102 110l-26 18"/></g><rect x="101" y="83" width="4" height="31" rx="2" fill="#e01010"/></svg>
<div class="a" style="left:1272px;top:1254px;width:15px;height:145px;background:#2b2b2b"></div>
<div class="a" style="left:1273px;top:1255px;width:14px;height:40px;background:#363636"></div>

<!-- bottom bar -->
<div class="a" style="left:0;top:1399px;width:1287px;height:8px;background:#1a2026"></div>
<div class="a" style="left:1183px;top:1404px;height:3px;overflow:hidden;font-size:11px;line-height:11px;color:#eee">12:12</div>
</body></html>
